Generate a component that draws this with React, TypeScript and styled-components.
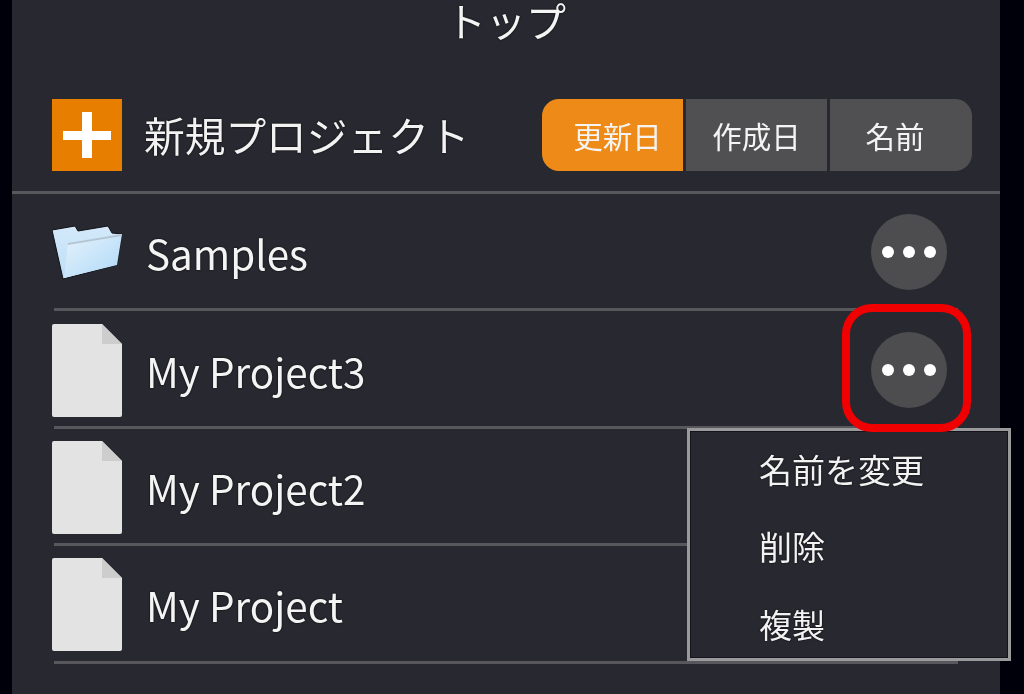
import { createGlobalStyle } from 'styled-components';
import styled from 'styled-components';

const GlobalStyle = createGlobalStyle`
  html, body {
    margin: 0;
    padding: 0;
    background: #00000a;
    overflow: hidden;
  }
  body {
    font-family: "Noto Sans CJK JP", "Noto Sans", sans-serif;
    color: #f2f2f2;
  }
`;

const Page = styled.div`
  width: 1024px;
  height: 694px;
  padding-left: 12px;
  box-sizing: border-box;
  overflow: hidden;
  position: relative;
  filter: blur(0.6px);
`;

const Panel = styled.main`
  width: 988px;
  height: 694px;
  background: #282830;
  display: flex;
  flex-direction: column;
`;

const Title = styled.h1`
  margin: 0;
  height: 99px;
  text-align: center;
  font-size: 40px;
  line-height: 40px;
  font-weight: 400;
  color: #f4f4f4;
  text-shadow: 0 0 2px #000;
  box-sizing: border-box;
`;

const Toolbar = styled.header`
  height: 95px;
  box-sizing: border-box;
  border-bottom: 3px solid #58585c;
  padding: 0 28px 0 40px;
  display: flex;
  align-items: flex-start;
`;

const NewProject = styled.div`
  display: flex;
  align-items: center;
  gap: 22px;
  height: 72px;
  flex: 1;
`;

const NewLabel = styled.span`
  font-size: 40.7px;
  line-height: 72px;
  color: #f2f2f2;
  text-shadow: 0 0 2px #000;
`;

const SortGroup = styled.div`
  display: flex;
  width: 430px;
  height: 72px;
  border-radius: 17px;
  overflow: hidden;
  gap: 3px;
`;

const SortButton = styled.button<{ $active?: boolean }>`
  width: 141px;
  flex-shrink: 0;
  box-sizing: border-box;
  border: 0;
  padding: 0;
  font-family: inherit;
  font-size: 29.5px;
  line-height: 72px;
  color: #f4f4f4;
  background: ${p => (p.$active ? '#ee8a17' : '#505052')};

  &:first-child {
    padding-left: 10px;
  }

  &:last-child {
    width: 142px;
    padding-right: 12px;
  }
`;

const Row = styled.div`
  height: 117.4px;
  box-sizing: border-box;
  margin: 0 42px;
  padding-top: 4px;
  border-bottom: 3px solid #58585c;
  display: flex;
  align-items: center;
`;

const IconSlot = styled.div<{ $flush?: boolean }>`
  width: 70px;
  margin-left: ${p => (p.$flush ? '0' : '-2px')};
  display: flex;
  flex-shrink: 0;
`;

const RowName = styled.span`
  flex: 1;
  margin-left: 24px;
  font-size: 40.4px;
  line-height: 50px;
  color: #f4f4f4;
  text-shadow: 0 0 2px #000;
`;

const MoreButton = styled.button`
  width: 76px;
  height: 76px;
  padding: 0;
  border: 0;
  border-radius: 50%;
  background: #4d4d4f;
  margin-right: 11px;
  display: flex;
  align-items: center;
  justify-content: center;
  gap: 9px;
  flex-shrink: 0;
  position: relative;
  top: -1px;
`;

const Dot = styled.span`
  width: 12px;
  height: 12px;
  border-radius: 50%;
  background: #fff;
`;

const Highlight = styled.div`
  position: absolute;
  left: 842px;
  top: 304px;
  width: 129px;
  height: 128px;
  box-sizing: border-box;
  border: 8px solid #f00000;
  border-radius: 30px;
`;

const Menu = styled.ul`
  position: absolute;
  left: 687px;
  top: 428px;
  width: 324px;
  height: 233px;
  box-sizing: border-box;
  margin: 0;
  padding: 5px 0 0 69px;
  list-style: none;
  background: #282830;
  border: 3px solid #9a9a9c;
  box-shadow: inset 0 0 0 1px #14141a;
  display: flex;
  flex-direction: column;
  justify-content: center;
`;

const MenuItem = styled.li`
  font-size: 33px;
  line-height: 77.5px;
  color: #f2f2f2;
  text-shadow: 0 0 2px #000;
`;

const PlusIcon = () => (
  <svg width="70" height="72" viewBox="0 0 70 72">
    <rect width="70" height="72" fill="#e87e00" />
    <rect x="11" y="32" width="48" height="9" fill="#fff" />
    <rect x="30" y="13" width="10" height="46" fill="#fff" />
  </svg>
);

const FolderIcon = () => (
  <svg width="70" height="56" viewBox="0 0 70 56">
    <defs>
      <linearGradient id="folderFront" x1="0" y1="0" x2="1" y2="1">
        <stop offset="0" stopColor="#e6f2fb" />
        <stop offset="1" stopColor="#aed9f8" />
      </linearGradient>
      <linearGradient id="folderBack" x1="0" y1="0" x2="0" y2="1">
        <stop offset="0" stopColor="#d4e9fa" />
        <stop offset="1" stopColor="#bcdef6" />
      </linearGradient>
    </defs>
    <path
      d="M0 5 L23 1 L26 6 L56 1 L60 8 L70 9 L65 40 L11 54 Z"
      fill="url(#folderBack)"
      stroke="#101014"
      strokeWidth="1"
      strokeLinejoin="round"
    />
    <path d="M16 18 L70 9 L65 40 L12 53 Z" fill="url(#folderFront)" />
    <path d="M16 18 L70 9 L69.7 11 L15.7 20 Z" fill="#b4c6d4" />
  </svg>
);

const FileIcon = () => (
  <svg width="70" height="94" viewBox="0 0 70 94">
    <path
      d="M2 0 L50 0 L70 20 L70 91 Q70 93 68 93 L2 93 Q0 93 0 91 L0 2 Q0 0 2 0 Z"
      fill="#e3e3e3"
    />
    <path d="M50 0 L70 20 L50 20 Z" fill="#cdcdcd" />
  </svg>
);

const projects = ['My Project3', 'My Project2', 'My Project'];

export default function App() {
  return (
    <Page>
      <GlobalStyle />
      <Panel>
        <Title>トップ</Title>
        <Toolbar>
          <NewProject>
            <IconSlot $flush>
              <PlusIcon />
            </IconSlot>
            <NewLabel>新規プロジェクト</NewLabel>
          </NewProject>
          <SortGroup>
            <SortButton $active>更新日</SortButton>
            <SortButton>作成日</SortButton>
            <SortButton>名前</SortButton>
          </SortGroup>
        </Toolbar>
        <Row>
          <IconSlot>
            <FolderIcon />
          </IconSlot>
          <RowName>Samples</RowName>
          <MoreButton aria-label="more">
            <Dot />
            <Dot />
            <Dot />
          </MoreButton>
        </Row>
        {projects.map((name, i) => (
          <Row key={name}>
            <IconSlot>
              <FileIcon />
            </IconSlot>
            <RowName>{name}</RowName>
            {i === 0 && (
              <MoreButton aria-label="more">
                <Dot />
                <Dot />
                <Dot />
              </MoreButton>
            )}
          </Row>
        ))}
      </Panel>
      <Menu>
        <MenuItem>名前を変更</MenuItem>
        <MenuItem>削除</MenuItem>
        <MenuItem>複製</MenuItem>
      </Menu>
      <Highlight />
    </Page>
  );
}
